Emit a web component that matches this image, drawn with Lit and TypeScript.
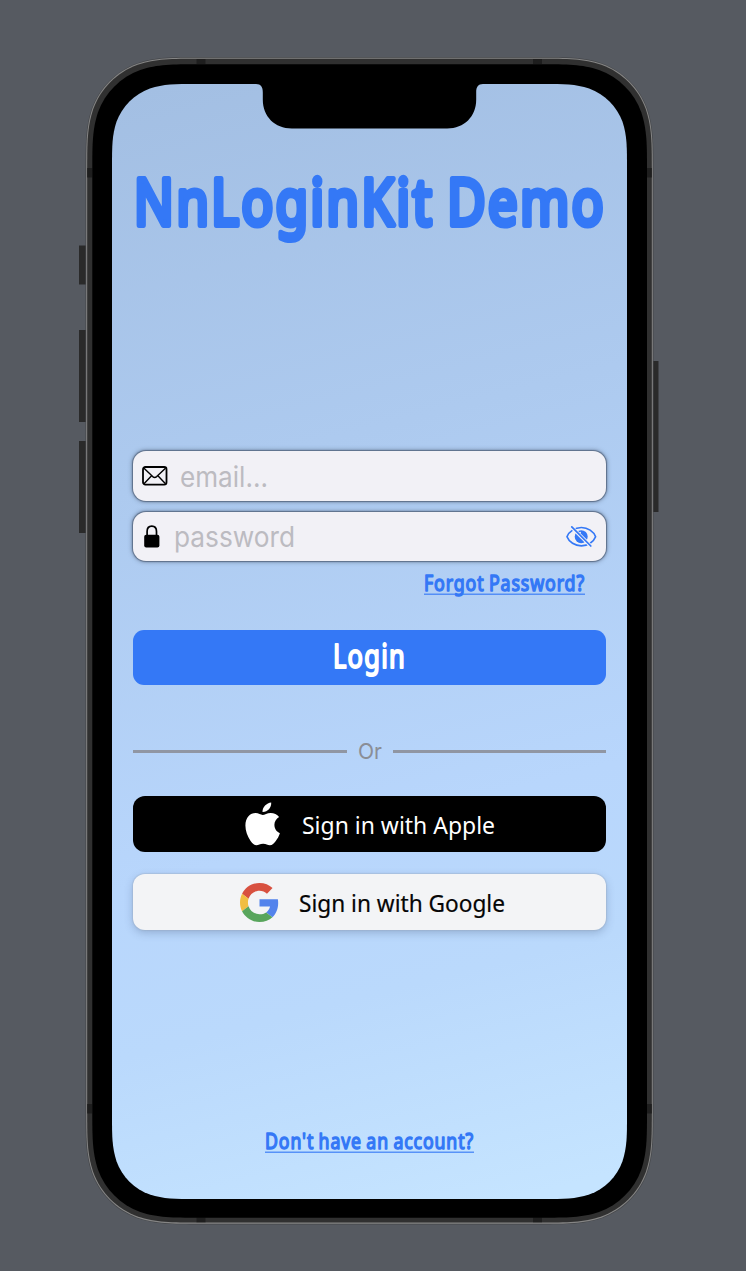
import { LitElement, html, css, svg } from "lit";
import { customElement, property } from "lit/decorators.js";

/** Closed path of a rectangle with continuous-curvature corners. */
function squircle(x: number, y: number, w: number, h: number, r: number): string {
  const X = x + w;
  const Y = y + h;
  const a = 1.4 * r, b = 1.05 * r, c = 0.86 * r, d = 0.631 * r, e = 0.075 * r, f = 0.372 * r, g = 0.169 * r;
  return [
    `M${x + a} ${y}H${X - a}`,
    `C${X - b} ${y} ${X - c} ${y} ${X - d} ${y + e}C${X - f} ${y + g} ${X - g} ${y + f} ${X - e} ${y + d}C${X} ${y + c} ${X} ${y + b} ${X} ${y + a}`,
    `V${Y - a}`,
    `C${X} ${Y - b} ${X} ${Y - c} ${X - e} ${Y - d}C${X - g} ${Y - f} ${X - f} ${Y - g} ${X - d} ${Y - e}C${X - c} ${Y} ${X - b} ${Y} ${X - a} ${Y}`,
    `H${x + a}`,
    `C${x + b} ${Y} ${x + c} ${Y} ${x + d} ${Y - e}C${x + f} ${Y - g} ${x + g} ${Y - f} ${x + e} ${Y - d}C${x} ${Y - c} ${x} ${Y - b} ${x} ${Y - a}`,
    `V${y + a}`,
    `C${x} ${y + b} ${x} ${y + c} ${x + e} ${y + d}C${x + g} ${y + f} ${x + f} ${y + g} ${x + d} ${y + e}C${x + c} ${y} ${x + b} ${y} ${x + a} ${y}Z`,
  ].join("");
}

/** One line of text set to an exact measure. */
@customElement("fit-text")
class FitText extends LitElement {
  @property() text = "";
  @property({ type: Number }) measure = 100;
  @property({ type: Number }) size = 20;
  @property({ type: Number }) stroke = 0;
  @property({ type: Boolean }) underline = false;
  @property({ type: Boolean, reflect: true }) spaced = false;

  static styles = css`
    :host { display: block; flex: none; line-height: 0; }
    .line { display: block; overflow: visible; }
    .glyphs { fill: currentColor; stroke: currentColor; stroke-linejoin: round; font-family: inherit; font-weight: inherit; }
    :host([spaced]) .glyphs { letter-spacing: 0.05em; word-spacing: -0.06em; }
    .rule { fill: currentColor; opacity: 0.75; }
  `;

  render() {
    const h = Math.round(this.size * 1.4);
    const base = this.size;
    return html`<svg class="line" width=${this.measure} height=${h}>
      <text class="glyphs" x="0" y=${base} font-size=${this.size} stroke-width=${this.stroke}
        textLength=${this.measure} lengthAdjust="spacingAndGlyphs">${this.text}</text>
      ${this.underline ? svg`<rect class="rule" x="0" y=${base + 2.5} width=${this.measure} height="1.5"/>` : null}
    </svg>`;
  }
}

@customElement("phone-frame")
class PhoneFrame extends LitElement {
  static styles = css`
    :host { display: block; }
    .art { display: block; }
  `;

  render() {
    return html`<svg class="art" width="746" height="1271" viewBox="0 0 746 1271">
      <defs>
        <linearGradient id="sky" gradientUnits="userSpaceOnUse" x1="220" y1="70" x2="510" y2="1200">
          <stop offset="0" stop-color="#a3bfe3"/>
          <stop offset="0.33" stop-color="#adcaef"/>
          <stop offset="0.66" stop-color="#b8d6fc"/>
          <stop offset="0.8" stop-color="#bad9fc"/>
          <stop offset="1" stop-color="#c5e4ff"/>
        </linearGradient>
        <filter id="soft" x="-50%" y="-5%" width="200%" height="110%"><feGaussianBlur stdDeviation="0.7"/></filter>
      </defs>
      <g fill="#2b2b2c">
        <g filter="url(#soft)">
          <rect x="79" y="245.500" width="9" height="39"/>
          <rect x="79" y="330" width="9" height="92"/>
          <rect x="79" y="441" width="9" height="92"/>
          <rect x="651" y="361" width="7.500" height="151"/>
        </g>
      </g>
      <path d=${squircle(85.5, 57, 568, 1167.500, 82)} fill="#45474a"/>
      <path d=${squircle(86.2, 57.7, 566.6, 1166, 81)} fill="#858585"/>
      <path d=${squircle(87.2, 58.8, 564.6, 1163.600, 80)} fill="#303030"/>
      <g fill="#1e1e1e">
        <path d="M196.500 59h9v5h-9zM533 59h9v5h-9zM196.500 1217.500h9v4.800h-9zM533 1217.500h9v4.800h-9z"/>
        <path d="M87.200 168h5v9.500h-5zM647 168h4.800v9.500h-4.800zM87.200 1104h5v9.500h-5zM647 1104h4.800v9.500h-4.800z"/>
      </g>
      <path d=${squircle(92.3, 64.2, 554.7, 1153.5, 76)} fill="#000"/>
      <path d=${squircle(112, 84, 515, 1115, 60)} fill="url(#sky)"/>
      <path d="M254 83v1h2c5 0 6.800 3 6.800 8.500v7c0 17 12 29 29 29h155.400c17 0 29-12 29-29v-7c0-5.500 1.800-8.500 6.800-8.500h2v-1z"/>
    </svg>`;
  }
}

const envelope = html`<svg width="26" height="20" viewBox="0 0 26 20" fill="none" stroke="#000" stroke-width="1.8" stroke-linejoin="round">
  <rect x="1" y="1" width="23.500" height="17.600" rx="2.400"/>
  <path d="M2 2.300l8.700 8.300q2 1.700 4 0L23.500 2.300M2 17.700l7.600-8M23.500 17.700l-7.600-8" stroke-width="1.400"/>
</svg>`;

const lock = html`<svg width="16" height="23" viewBox="0 0 16 23">
  <path d="M3.100 10.500V6.600C3.100 2.900 5 1.100 7.800 1.100s4.700 1.800 4.700 5.500v3.900" fill="none" stroke="#000" stroke-width="1.700"/>
  <rect x="0.200" y="9.700" width="15.200" height="12.800" rx="2"/>
</svg>`;

const eyeSlash = html`<svg width="31" height="22" viewBox="0 0 31 22" fill="none" stroke="#3478f6">
  <circle cx="15.200" cy="10.700" r="6.500" fill="#3478f6" stroke="none"/>
  <path d="M12.400 8.200a3.200 3.200 0 0 1 2.600-2" stroke="#f2f1f6" stroke-width="1"/>
  <path d="M1 10.700C3 5.500 9 1.500 15.400 1.500s12.200 4 14.200 9.200c-2 5.200-7.800 9.100-14.200 9.100S3 15.900 1 10.700z" stroke-width="1.700" stroke-linejoin="round"/>
  <path d="M4.800 0.300L25.500 20.700" stroke="#f2f1f6" stroke-width="3.700"/>
  <path d="M5.800 0.900L24.800 20" stroke-width="1.700" stroke-linecap="round"/>
</svg>`;

const apple = html`<svg width="36" height="44" viewBox="0 0 36 44" fill="#fff">
  <path d="M26.200.400c.3 5.300-3.700 9.700-8.700 9.500C17.200 5 21.700.800 26.200.400z"/>
  <path d="M34.100 14.900c-3 1.900-4.700 4.500-4.700 7.900 0 3.900 2.200 7 5.500 8.400-.9 2.900-2.400 5.500-4.300 8-1.700 2.300-3.200 4-5.700 4-2.400 0-3.600-1.500-6.800-1.500s-4.500 1.500-6.800 1.500c-2.400 0-4.100-1.900-5.700-4.200C2.400 34.400.4 28.700.4 23.500c0-7.800 4.800-12.400 10.200-12.400 2.900 0 5.200 1.900 7.100 1.900 1.800 0 4.500-2 7.900-2 3.500 0 6.500 1.400 8.500 3.900z"/>
</svg>`;

const google = html`<svg width="39" height="39" viewBox="0 0 48 48">
  <path fill="#d85140" d="M24 9.500c3.540 0 6.710 1.220 9.210 3.600l6.850-6.850C35.900 2.380 30.470 0 24 0 14.620 0 6.510 5.380 2.560 13.220l7.980 6.190C12.430 13.720 17.740 9.500 24 9.500z"/>
  <path fill="#5383ec" d="M46.980 24.550c0-1.570-.15-3.090-.38-4.550H24v9.020h12.940c-.58 2.960-2.260 5.480-4.780 7.180l7.730 6c4.510-4.180 7.090-10.360 7.090-17.650z"/>
  <path fill="#f1be42" d="M10.530 28.590c-.48-1.450-.76-2.990-.76-4.590s.27-3.140.76-4.590l-7.980-6.190C.92 16.460 0 20.120 0 24c0 3.880.92 7.540 2.560 10.780l7.970-6.190z"/>
  <path fill="#58a55c" d="M24 48c6.480 0 11.930-2.130 15.890-5.810l-7.730-6c-2.150 1.450-4.920 2.300-8.160 2.300-6.260 0-11.570-4.220-13.470-9.910l-7.980 6.190C6.510 42.620 14.620 48 24 48z"/>
</svg>`;

@customElement("app-root")
class AppRoot extends LitElement {
  static styles = css`
    :host { display: block; background: #565a61; }
    .stage { display: grid; grid-template-columns: 746px; width: 746px; height: 1271px; font-family: "Noto Sans", sans-serif; }
    .layer { grid-area: 1 / 1; }
    .screen { box-sizing: border-box; display: flex; flex-direction: column; padding: 161px 140px 0 133px; z-index: 1; }
    .marker { color: #3478f6; font-weight: 400; }
    .title { height: 80px; padding-left: 1px; }
    .fields { display: flex; flex-direction: column; gap: 11px; margin-top: 210px; }
    .field { box-sizing: border-box; height: 50px; display: flex; align-items: center; border-radius: 13px; background: #f2f1f6; box-shadow: 0 0 1px 1px #4c5d75bb, 0 0 4px 1px #4c5d7599; padding: 0 9px; color: #bcbbc1; font-family: Inter, sans-serif; }
    .password { height: 49px; padding-left: 11px; }
    .email-label { margin-left: 12px; padding-top: 5px; }
    .password-label { margin: 0 auto 0 14px; padding-top: 4px; }
    .links { display: flex; justify-content: flex-end; height: 69px; padding: 8px 21px 0 0; box-sizing: border-box; }
    .login { height: 55px; display: flex; justify-content: center; box-sizing: border-box; padding-top: 6px; border-radius: 11px; background: #3478f6; }
    .white { color: #fff; }
    .divider { display: flex; align-items: center; gap: 11px; height: 30px; margin-top: 51px; color: #8a8e97; font-family: Inter, sans-serif; }
    .or { padding-top: 3px; }
    .bar { flex: 1; height: 3px; background: #9096a3; }
    .provider { display: flex; align-items: center; height: 56px; border-radius: 12px; box-sizing: border-box; }
    .caption { padding-top: 5px; }
    .apple { margin-top: 30px; padding-left: 112px; gap: 21px; background: #000; color: #fff; }
    .google { margin-top: 22px; padding-left: 107px; gap: 20px; background: #f3f4f6; color: #050505; box-shadow: 0 0 1px 1px #97a5b955, 0 3px 9px #30456844; }
    .signup { display: flex; justify-content: center; margin-top: 197px; }
  `;

  render() {
    return html`<main class="stage">
      <phone-frame class="layer"></phone-frame>
      <section class="layer screen">
        <div class="title marker"><fit-text text="NnLoginKit Demo" measure="472" size="64" stroke="6" spaced></fit-text></div>
        <div class="fields">
          <div class="field">${envelope}<fit-text class="email-label" text="email..." measure="88" size="28"></fit-text></div>
          <div class="field password">${lock}<fit-text class="password-label" text="password" measure="121" size="28"></fit-text>${eyeSlash}</div>
        </div>
        <div class="links marker"><fit-text text="Forgot Password?" measure="161" size="22" stroke="1.5" spaced underline></fit-text></div>
        <div class="login marker white"><fit-text text="Login" measure="73" size="32" stroke="2" spaced></fit-text></div>
        <div class="divider"><span class="bar"></span><fit-text class="or" text="Or" measure="24" size="22"></fit-text><span class="bar"></span></div>
        <div class="provider apple">${apple}<fit-text class="caption" text="Sign in with Apple" measure="193" size="24"></fit-text></div>
        <div class="provider google">${google}<fit-text class="caption" text="Sign in with Google" measure="206" size="24" stroke="0.200"></fit-text></div>
        <div class="signup marker"><fit-text text="Don't have an account?" measure="209" size="22" stroke="1.5" spaced underline></fit-text></div>
      </section>
    </main>`;
  }
}
